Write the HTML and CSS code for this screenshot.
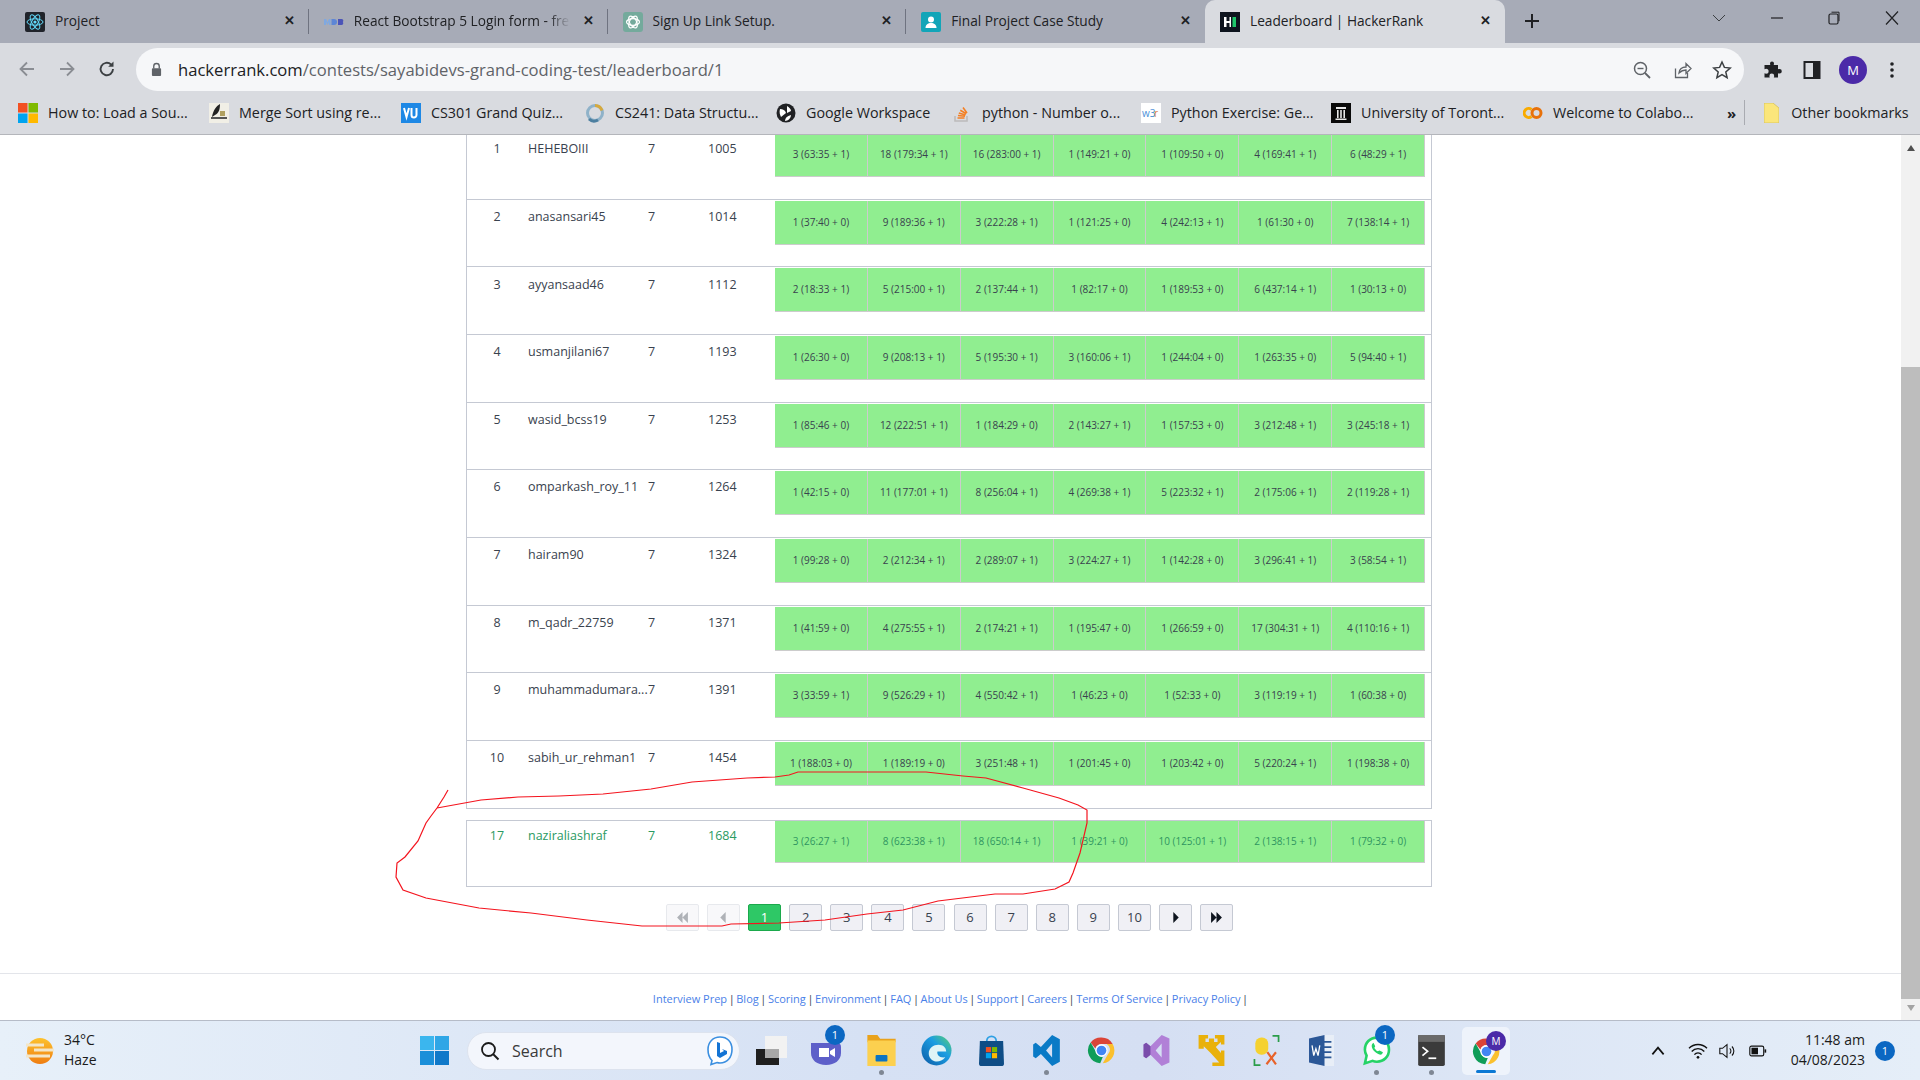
FILE: index.html
```html
<!DOCTYPE html>
<html lang="en">
<head>
<meta charset="utf-8">
<title>Leaderboard | HackerRank</title>
<link rel="stylesheet" href="styles.css">
</head>
<body>
<svg class="defs" width="0" height="0" aria-hidden="true">
  <symbol id="chrome" viewBox="0 0 48 48">
    <path d="M24 4a20 20 0 0 1 17.300 10H24a10 10 0 0 0-9.500 7L7.200 11.800A20 20 0 0 1 24 4z" fill="#db4437"/>
    <path d="M41.300 14A20 20 0 0 1 26 43.900l8-14a10 10 0 0 0-2-15.900z" fill="#fbc02d"/>
    <path d="M7.200 11.800 16 27a10 10 0 0 0 10 7l-4 9.900A20 20 0 0 1 7.200 11.800z" fill="#0f9d58"/>
    <circle cx="24" cy="24" r="9.500" fill="#fff"/><circle cx="24" cy="24" r="7.500" fill="#4285f4"/>
  </symbol>
</svg>

<header class="tabstrip">
  <div class="tab">
    <svg class="fav" viewBox="0 0 20 20"><rect width="20" height="20" rx="2" fill="#20232a"/><g fill="none" stroke="#61dafb" stroke-width="1"><ellipse cx="10" cy="10" rx="8" ry="3.200"/><ellipse cx="10" cy="10" rx="8" ry="3.200" transform="rotate(60 10 10)"/><ellipse cx="10" cy="10" rx="8" ry="3.200" transform="rotate(120 10 10)"/></g><circle cx="10" cy="10" r="1.600" fill="#61dafb"/></svg>
    <span class="tab-title">Project</span><span class="tab-x">✕</span>
  </div>
  <div class="tab">
    <svg class="fav" viewBox="0 0 20 20"><path d="M0 7h2l1.500 3L5 7h1.500v6H5V10l-1.500 3L2 10v3H0z" fill="#7fa8e0"/><path d="M7.500 7H10a3 3 0 0 1 0 6H7.500z" fill="#5d86d6"/><path d="M14 7h3a1.800 1.800 0 0 1 1.800 3A1.800 1.800 0 0 1 17.500 13H14z" fill="#4b54b8"/></svg>
    <span class="tab-title tab-fade">React Bootstrap 5 Login form - free</span><span class="tab-x">✕</span>
  </div>
  <div class="tab">
    <svg class="fav" viewBox="0 0 20 20"><rect width="20" height="20" rx="3" fill="#74aa9c"/><g fill="none" stroke="#fff" stroke-width="1.200"><ellipse cx="10" cy="10" rx="6.500" ry="3.400"/><ellipse cx="10" cy="10" rx="6.500" ry="3.400" transform="rotate(60 10 10)"/><ellipse cx="10" cy="10" rx="6.500" ry="3.400" transform="rotate(120 10 10)"/></g></svg>
    <span class="tab-title">Sign Up Link Setup.</span><span class="tab-x">✕</span>
  </div>
  <div class="tab">
    <svg class="fav" viewBox="0 0 20 20"><rect width="20" height="20" rx="2" fill="#12a5b8"/><circle cx="10" cy="7.500" r="3" fill="#fff"/><path d="M4.500 16c0-3.500 2.500-5 5.500-5s5.500 1.500 5.500 5z" fill="#fff"/></svg>
    <span class="tab-title">Final Project Case Study</span><span class="tab-x">✕</span>
  </div>
  <div class="tab tab-active">
    <svg class="fav" viewBox="0 0 20 20"><rect width="20" height="20" fill="#0e141e"/><path d="M4 5h2.500v4h3V5H11v10H9.500v-4h-3v4H4z" fill="#fff"/><rect x="12.500" y="5" width="3.500" height="10" fill="#1ec66a"/></svg>
    <span class="tab-title">Leaderboard | HackerRank</span><span class="tab-x">✕</span>
  </div>
  <svg class="newtab" viewBox="0 0 16 16"><path d="M8 1v14M1 8h14" stroke="#202124" stroke-width="2"/></svg>
  <div class="winctl">
    <svg viewBox="0 0 16 16"><path d="M2 5l6 6 6-6" fill="none" stroke="#3c4043" stroke-width="1"/></svg>
    <svg viewBox="0 0 16 16"><path d="M2 8h12" stroke="#202124" stroke-width="1.200"/></svg>
    <svg viewBox="0 0 16 16"><rect x="3" y="4" width="9" height="10" rx="1.500" fill="none" stroke="#202124" stroke-width="1.200"/><path d="M5.500 2.200H13v9" fill="none" stroke="#202124" stroke-width="1"/></svg>
    <svg viewBox="0 0 16 16"><path d="M2 1.500l12 13M14 1.500l-12 13" stroke="#202124" stroke-width="1.200"/></svg>
  </div>
</header>

<div class="toolbar">
  <div class="nav">
    <svg viewBox="0 0 20 20"><path d="M17 10H4M10 3.500L3.500 10l6.500 6.500" fill="none" stroke="#8a8d93" stroke-width="1.800"/></svg>
    <svg viewBox="0 0 20 20"><path d="M3 10h13M10 3.500l6.500 6.500-6.500 6.500" fill="none" stroke="#8a8d93" stroke-width="1.800"/></svg>
    <svg viewBox="0 0 20 20"><path d="M16 10a6.200 6.200 0 1 1-1.900-4.500" fill="none" stroke="#3c4043" stroke-width="1.900"/><path d="M16.500 2.500v5.300h-5.300z" fill="#3c4043"/></svg>
  </div>
  <div class="omnibox">
    <svg class="lock" viewBox="0 0 12 16"><path d="M3 7V4.500a3 3 0 0 1 6 0V7" fill="none" stroke="#5f6368" stroke-width="1.500"/><rect x="1" y="6.500" width="10" height="8.500" rx="1" fill="#5f6368"/></svg>
    <div class="url"><span class="host">hackerrank.com</span>/contests/sayabidevs-grand-coding-test/leaderboard/1</div>
    <div class="omni-icons">
      <svg viewBox="0 0 20 20"><circle cx="8.500" cy="8.500" r="6" fill="none" stroke="#5f6368" stroke-width="1.500"/><path d="M13 13l5 5" stroke="#5f6368" stroke-width="1.800"/><path d="M5.500 8.500h6" stroke="#5f6368" stroke-width="1.400"/></svg>
      <svg viewBox="0 0 20 20"><path d="M3.500 8.500V17.500h12V13" fill="none" stroke="#5f6368" stroke-width="1.300"/><path d="M7 13c.5-4 3.500-6 7-6V3.500l5 5-5 5V10c-3 0-5 1-7 3z" fill="none" stroke="#5f6368" stroke-width="1.300"/></svg>
      <svg viewBox="0 0 20 20"><path d="M10 2l2.400 5.400 5.800.6-4.400 3.900 1.300 5.800L10 14.700l-5.100 3 1.300-5.800L1.800 8l5.800-.6z" fill="none" stroke="#3c4043" stroke-width="1.500"/></svg>
    </div>
  </div>
  <div class="tools">
    <svg viewBox="0 0 20 20"><path d="M8 2a2 2 0 0 1 4 0c0 .5-.2 1-.3 1.500H16v4.300c.5-.2 1-.3 1.500-.3a2.300 2.300 0 0 1 0 4.600c-.5 0-1-.2-1.500-.4V16h-4.200c.2-.6.400-1 .4-1.600a2.400 2.400 0 0 0-4.800 0c0 .6.200 1 .4 1.600H2.500v-4.300c.5.300 1 .5 1.600.5a2.500 2.500 0 0 0 0-5c-.6 0-1.100.2-1.600.5V3.500h5.800C8.200 3 8 2.500 8 2z" fill="#202124" transform="translate(0 1.500)"/></svg>
    <svg viewBox="0 0 20 20"><rect x="2.500" y="2" width="15" height="16" fill="none" stroke="#202124" stroke-width="2"/><rect x="11" y="2" width="6.500" height="16" fill="#202124"/></svg>
    <div class="avatar">M</div>
    <svg viewBox="0 0 20 20"><circle cx="10" cy="4" r="1.800" fill="#202124"/><circle cx="10" cy="10" r="1.800" fill="#202124"/><circle cx="10" cy="16" r="1.800" fill="#202124"/></svg>
  </div>
</div>

<nav class="bookmarks">
  <a class="bm"><svg class="fav" viewBox="0 0 20 20"><rect width="9.500" height="9.500" fill="#f25022"/><rect x="10.500" width="9.500" height="9.500" fill="#7fba00"/><rect y="10.500" width="9.500" height="9.500" fill="#00a4ef"/><rect x="10.500" y="10.500" width="9.500" height="9.500" fill="#ffb900"/></svg>How to: Load a Sou...</a>
  <a class="bm"><svg class="fav" viewBox="0 0 20 20"><rect width="20" height="20" fill="#f1efe6"/><path d="M3 14C4 8 7 3 11 1c0 5-1 9-5 11z" fill="#222"/><rect x="2" y="14" width="16" height="2" fill="#555"/><path d="M11 8h5v5h-5z" fill="#b0a060"/></svg>Merge Sort using re...</a>
  <a class="bm"><svg class="fav" viewBox="0 0 20 20"><rect width="20" height="20" fill="#1e88e5"/><path d="M3 5l2.500 9L8 5M10.500 5v7a2.500 2.500 0 0 0 5 0V5" fill="none" stroke="#fff" stroke-width="2"/></svg>CS301 Grand Quiz...</a>
  <a class="bm"><svg class="fav" viewBox="0 0 20 20"><circle cx="10" cy="10" r="7.500" fill="none" stroke="#8fb2c9" stroke-width="3"/><path d="M10 2.500a7.500 7.500 0 0 1 7 5" fill="none" stroke="#d6a93d" stroke-width="3"/><path d="M4 16a7.500 7.500 0 0 0 9 1" fill="none" stroke="#4c7fa0" stroke-width="3"/></svg>CS241: Data Structu...</a>
  <a class="bm"><svg class="fav" viewBox="0 0 20 20"><circle cx="10" cy="10" r="9.500" fill="#202124"/><path d="M4 6c3 0 5 1 6 4l-5 4c-1-2-2-5-1-8zM11 3c2 1 4 3 4 5l-4 2zM9 18c0-3 2-5 6-6 0 3-3 6-6 6z" fill="#fff"/></svg>Google Workspace</a>
  <a class="bm"><svg class="fav" viewBox="0 0 20 20"><path d="M3 13v5h12v-5" fill="none" stroke="#bcbbbb" stroke-width="1.600"/><path d="M5.500 15h7M6 12.500l7 .8M6.800 10l6.700 2M8.300 7.300l6 3.500M11 4.500l4 5.500" stroke="#f48024" stroke-width="1.600"/></svg>python - Number o...</a>
  <a class="bm"><svg class="fav" viewBox="0 0 20 20"><rect width="20" height="20" fill="#fff"/><text x="1" y="14" font-size="10" fill="#4a90d9" font-family="Open Sans">w3</text><text x="13" y="14" font-size="10" fill="#e07a3a" font-family="Open Sans">r</text></svg>Python Exercise: Ge...</a>
  <a class="bm"><svg class="fav" viewBox="0 0 20 20"><rect width="20" height="20" fill="#0a0a0a"/><path d="M5 4h10v2H5zM6 7h1.600v8H6zM9.200 7h1.600v8H9.200zM12.400 7H14v8h-1.600zM4.500 15.500h11V17h-11z" fill="#e8e8e8"/></svg>University of Toront...</a>
  <a class="bm"><svg class="fav" viewBox="0 0 20 20"><g fill="none" stroke-width="3"><path d="M8.500 6.500a4.500 4.500 0 1 0 0 7" stroke="#f9ab00"/><circle cx="13.500" cy="10" r="4.500" stroke="#e8710a"/></g></svg>Welcome to Colabo...</a>
  <div class="bm-end">
    <span class="chev">»</span><span class="bm-div"></span>
    <a class="bm bm-other"><svg class="folder" viewBox="0 0 15 20"><path d="M0 0h9l6 5v15H0z" fill="#fbe67b"/><path d="M0 0h9l6 5v15H0z" fill="none" stroke="#d6c05a" stroke-width=".8"/></svg>Other bookmarks</a>
  </div>
</nav>

<div class="viewport">
  <main class="page">
    <section class="board">
      <div class="row row-first"><div class="rank">1</div><div class="name">HEHEBOIII</div><div class="solved">7</div><div class="score">1005</div><div class="cells"><div class="cell">3 (63:35 + 1)</div><div class="cell">18 (179:34 + 1)</div><div class="cell">16 (283:00 + 1)</div><div class="cell">1 (149:21 + 0)</div><div class="cell">1 (109:50 + 0)</div><div class="cell">4 (169:41 + 1)</div><div class="cell">6 (48:29 + 1)</div></div></div>
      <div class="row"><div class="rank">2</div><div class="name">anasansari45</div><div class="solved">7</div><div class="score">1014</div><div class="cells"><div class="cell">1 (37:40 + 0)</div><div class="cell">9 (189:36 + 1)</div><div class="cell">3 (222:28 + 1)</div><div class="cell">1 (121:25 + 0)</div><div class="cell">4 (242:13 + 1)</div><div class="cell">1 (61:30 + 0)</div><div class="cell">7 (138:14 + 1)</div></div></div>
      <div class="row"><div class="rank">3</div><div class="name">ayyansaad46</div><div class="solved">7</div><div class="score">1112</div><div class="cells"><div class="cell">2 (18:33 + 1)</div><div class="cell">5 (215:00 + 1)</div><div class="cell">2 (137:44 + 1)</div><div class="cell">1 (82:17 + 0)</div><div class="cell">1 (189:53 + 0)</div><div class="cell">6 (437:14 + 1)</div><div class="cell">1 (30:13 + 0)</div></div></div>
      <div class="row"><div class="rank">4</div><div class="name">usmanjilani67</div><div class="solved">7</div><div class="score">1193</div><div class="cells"><div class="cell">1 (26:30 + 0)</div><div class="cell">9 (208:13 + 1)</div><div class="cell">5 (195:30 + 1)</div><div class="cell">3 (160:06 + 1)</div><div class="cell">1 (244:04 + 0)</div><div class="cell">1 (263:35 + 0)</div><div class="cell">5 (94:40 + 1)</div></div></div>
      <div class="row"><div class="rank">5</div><div class="name">wasid_bcss19</div><div class="solved">7</div><div class="score">1253</div><div class="cells"><div class="cell">1 (85:46 + 0)</div><div class="cell">12 (222:51 + 1)</div><div class="cell">1 (184:29 + 0)</div><div class="cell">2 (143:27 + 1)</div><div class="cell">1 (157:53 + 0)</div><div class="cell">3 (212:48 + 1)</div><div class="cell">3 (245:18 + 1)</div></div></div>
      <div class="row"><div class="rank">6</div><div class="name">omparkash_roy_11</div><div class="solved">7</div><div class="score">1264</div><div class="cells"><div class="cell">1 (42:15 + 0)</div><div class="cell">11 (177:01 + 1)</div><div class="cell">8 (256:04 + 1)</div><div class="cell">4 (269:38 + 1)</div><div class="cell">5 (223:32 + 1)</div><div class="cell">2 (175:06 + 1)</div><div class="cell">2 (119:28 + 1)</div></div></div>
      <div class="row"><div class="rank">7</div><div class="name">hairam90</div><div class="solved">7</div><div class="score">1324</div><div class="cells"><div class="cell">1 (99:28 + 0)</div><div class="cell">2 (212:34 + 1)</div><div class="cell">2 (289:07 + 1)</div><div class="cell">3 (224:27 + 1)</div><div class="cell">1 (142:28 + 0)</div><div class="cell">3 (296:41 + 1)</div><div class="cell">3 (58:54 + 1)</div></div></div>
      <div class="row"><div class="rank">8</div><div class="name">m_qadr_22759</div><div class="solved">7</div><div class="score">1371</div><div class="cells"><div class="cell">1 (41:59 + 0)</div><div class="cell">4 (275:55 + 1)</div><div class="cell">2 (174:21 + 1)</div><div class="cell">1 (195:47 + 0)</div><div class="cell">1 (266:59 + 0)</div><div class="cell">17 (304:31 + 1)</div><div class="cell">4 (110:16 + 1)</div></div></div>
      <div class="row"><div class="rank">9</div><div class="name">muhammadumara...</div><div class="solved">7</div><div class="score">1391</div><div class="cells"><div class="cell">3 (33:59 + 1)</div><div class="cell">9 (526:29 + 1)</div><div class="cell">4 (550:42 + 1)</div><div class="cell">1 (46:23 + 0)</div><div class="cell">1 (52:33 + 0)</div><div class="cell">3 (119:19 + 1)</div><div class="cell">1 (60:38 + 0)</div></div></div>
      <div class="row"><div class="rank">10</div><div class="name">sabih_ur_rehman1</div><div class="solved">7</div><div class="score">1454</div><div class="cells"><div class="cell">1 (188:03 + 0)</div><div class="cell">1 (189:19 + 0)</div><div class="cell">3 (251:48 + 1)</div><div class="cell">1 (201:45 + 0)</div><div class="cell">1 (203:42 + 0)</div><div class="cell">5 (220:24 + 1)</div><div class="cell">1 (198:38 + 0)</div></div></div>
      <div class="row row-me"><div class="rank">17</div><div class="name">naziraliashraf</div><div class="solved">7</div><div class="score">1684</div><div class="cells"><div class="cell">3 (26:27 + 1)</div><div class="cell">8 (623:38 + 1)</div><div class="cell">18 (650:14 + 1)</div><div class="cell">1 (39:21 + 0)</div><div class="cell">10 (125:01 + 1)</div><div class="cell">2 (138:15 + 1)</div><div class="cell">1 (79:32 + 0)</div></div></div>
    </section>

    <div class="pager">
      <a class="pg pg-off"><svg viewBox="0 0 12 10"><path d="M6 0v10L1 5zM11 0v10L6 5z" fill="#39424e"/></svg></a>
      <a class="pg pg-off"><svg viewBox="0 0 12 10"><path d="M8 0v10L3 5z" fill="#39424e"/></svg></a>
      <a class="pg pg-on">1</a><a class="pg">2</a><a class="pg">3</a><a class="pg">4</a><a class="pg">5</a><a class="pg">6</a><a class="pg">7</a><a class="pg">8</a><a class="pg">9</a><a class="pg">10</a>
      <a class="pg"><svg viewBox="0 0 12 10"><path d="M4 0v10l5-5z" fill="#0e141e"/></svg></a>
      <a class="pg"><svg viewBox="0 0 12 10"><path d="M1 0v10l5-5zM6 0v10l5-5z" fill="#0e141e"/></svg></a>
    </div>

    <footer class="foot">
      <a>Interview Prep</a> | <a>Blog</a> | <a>Scoring</a> | <a>Environment</a> | <a>FAQ</a> | <a>About Us</a> | <a>Support</a> | <a>Careers</a> | <a>Terms Of Service</a> | <a>Privacy Policy</a> |
    </footer>

    <svg class="scribble" viewBox="0 0 1901 885" aria-hidden="true">
      <path d="M448 655L444 662L437 673L431 681L426 688L418 706L405 722L397 728L396 742L403 755L426 763L479 773L531 778L587 785L642 791L722 791L731 789L779 788L825 785L867 779L903 775L938 766L995 759L1023 759L1055 754L1069 747L1073 738L1080 718L1087 688L1087 675L1078 670L1059 663L1023 653L986 643L963 641L926 637L798 637L789 640L775 642L747 643L692 647L651 654L603 659L559 661L518 662L481 665L437 673" fill="none" stroke="#f4141e" stroke-width="1.200"/>
    </svg>
  </main>
  <aside class="scrollbar">
    <span class="sb-up"></span>
    <span class="sb-thumb"></span>
    <span class="sb-down"></span>
  </aside>
</div>

<footer class="taskbar">
  <div class="weather">
    <svg class="wx-icon" viewBox="0 0 28 34"><defs><linearGradient id="sun" x1="0" y1="0" x2="0" y2="1"><stop offset="0" stop-color="#fdc22e"/><stop offset="1" stop-color="#ef7d11"/></linearGradient></defs><circle cx="14" cy="17" r="13" fill="url(#sun)"/><path d="M0 11h18M8 16h20M0 22h24" stroke="#f3e6c8" stroke-width="3"/></svg>
    <div class="wx-text"><div>34°C</div><div>Haze</div></div>
  </div>
  <svg class="start" viewBox="0 0 29 29"><rect width="14" height="14" fill="#3bb6ee"/><rect x="15" width="14" height="14" fill="#2fa6e6"/><rect y="15" width="14" height="14" fill="#1b8fd9"/><rect x="15" y="15" width="14" height="14" fill="#1079c9"/></svg>
  <div class="search">
    <svg class="search-glass" viewBox="0 0 20 20"><circle cx="8.500" cy="8.500" r="6.500" fill="none" stroke="#1a1a1a" stroke-width="1.800"/><path d="M13 13l5.500 5.500" stroke="#1a1a1a" stroke-width="2"/></svg>
    <span class="search-label">Search</span>
    <svg class="bing" viewBox="0 0 26 30"><path d="M13 1C6 1 1 6 1 13.500c0 5 2 9 4 11l-1 4 6-2c1 .3 2 .5 3 .5 7 0 12-5.500 12-13.500S20 1 13 1z" fill="#fff" stroke="#3b8fe0" stroke-width="1.600"/><path d="M10 6l3 1v10l4-2-2-2 5 2v3l-7 4-3-2z" fill="#1474d4"/></svg>
  </div>
  <div class="apps">
    <svg class="app" viewBox="0 0 31 29"><rect x="0" y="13" width="23" height="16" fill="#1f1f1f"/><rect x="9" y="0" width="22" height="22" fill="#f2f2f2"/><rect x="9" y="13" width="14" height="9" fill="#a8a8a8"/></svg>
    <span class="app app-wrap"><svg viewBox="0 0 31 31"><path d="M0 8h26a4 4 0 0 1 4 4v6c0 7-6 12-15 12S0 25 0 18z" fill="#5d5fc9"/><path d="M8 13h10v9H8zM19 16l5-3v9l-5-3z" fill="#fff"/></svg><span class="badge badge-app">1</span></span>
    <span class="app app-wrap"><svg viewBox="0 0 31 34"><path d="M0 0h11l3 4h17v4H0z" fill="#e9a21b"/><path d="M0 6h31v28H0z" fill="#fcd04f"/><rect x="9" y="22" width="13" height="7" rx="1" fill="#0b74c4"/></svg><span class="dot"></span></span>
    <svg class="app" viewBox="0 0 32 32"><defs><linearGradient id="edge" x1="0" y1="1" x2="1" y2="0"><stop offset="0" stop-color="#0c59a4"/><stop offset=".6" stop-color="#1b9de2"/><stop offset="1" stop-color="#5dd36c"/></linearGradient></defs><circle cx="16" cy="16" r="15.500" fill="url(#edge)"/><path d="M8 19c0-6 5-9 10-9 5 0 8 3 8 7h-9c-1 3 2 7 8 6-3 4-8 5-11 4-3-1-6-4-6-8z" fill="#dff4f6"/></svg>
    <svg class="app" viewBox="0 0 31 36"><path d="M10 7a5.500 5.500 0 0 1 11 0" fill="none" stroke="#2ea0e4" stroke-width="2"/><path d="M2 7h27l1 26a3 3 0 0 1-3 3H4a3 3 0 0 1-3-3z" fill="#0f4d86"/><rect x="9" y="14" width="6" height="6" fill="#f25022"/><rect x="16" y="14" width="6" height="6" fill="#7fba00"/><rect x="9" y="21" width="6" height="6" fill="#00a4ef"/><rect x="16" y="21" width="6" height="6" fill="#ffb900"/></svg>
    <span class="app app-wrap"><svg viewBox="0 0 31 36"><path d="M22 0l9 5v26l-9 5L9 22l-6 5-3-2V11l3-2 6 5zM22 10l-7 8 7 8z" fill="#0a7ac6"/></svg><span class="dot"></span></span>
    <svg class="app" viewBox="0 0 48 48"><use href="#chrome"/></svg>
    <svg class="app" viewBox="0 0 30 36"><path d="M21 0l9 4v28l-9 4L8 23l-5 4-3-2V11l3-2 5 4zM21 10l-7 8 7 8z" fill="#b180d7"/><path d="M0 11l3-2 5 4 0 10-5 4-3-2z" fill="#7a4dab"/></svg>
    <svg class="app" viewBox="0 0 30 36"><path d="M0 0h11v4H8v4h4V4h6v4h4V4h-3V0h11v11h-4V8l-6 6 6 7v-3h4v18H16v-4h8l-10-11-8-8v3H0z" fill="#e9b10a"/></svg>
    <svg class="app" viewBox="0 0 30 36"><path d="M22 0h8v8h-2V2h-6zM0 28h2v6h6v2H0z" fill="#2a9d4a"/><rect x="2" y="3" width="15" height="20" rx="7" fill="#f5d130"/><path d="M16 20l10 14M26 20L15 34" stroke="#e8622a" stroke-width="2.500"/></svg>
    <svg class="app" viewBox="0 0 29 36"><path d="M13 0h16v36H13z" fill="#e8eef7"/><path d="M17 8h9M17 14h9M17 20h9M17 26h9" stroke="#2b5797" stroke-width="2"/><path d="M0 4l18-4v36L0 32z" fill="#2b5797"/><path d="M3.500 12l2 12 2.500-8 2.500 8 2-12" fill="none" stroke="#fff" stroke-width="1.500"/></svg>
    <span class="app app-wrap"><svg viewBox="0 0 31 36"><path d="M16 3C8 3 2 9 2 17c0 3 1 5 2 7l-2 9 9-3c2 1 3 1 5 1 8 0 14-6 14-14S24 3 16 3z" fill="#fff" stroke="#25d366" stroke-width="3"/><path d="M11 10c-2 2-1 6 2 9s7 5 9 3l1-2-4-2-2 1c-2-1-3-3-4-4l1-2-2-4z" fill="#25d366"/></svg><span class="badge badge-app">1</span><span class="dot"></span></span>
    <span class="app app-wrap"><svg viewBox="0 0 31 36"><rect width="31" height="36" rx="2" y="0" fill="#3b3b3b"/><rect width="31" height="8" fill="#6a6a6a"/><path d="M5 14l6 5-6 5" fill="none" stroke="#fff" stroke-width="2"/><path d="M12 27h9" stroke="#fff" stroke-width="2"/></svg><span class="dot"></span></span>
    <span class="app-active"><svg viewBox="0 0 48 48"><use href="#chrome"/></svg><span class="app-avatar">M</span><span class="app-line"></span></span>
  </div>
  <div class="tray">
    <svg class="tray-i tray-caret" viewBox="0 0 16 16"><path d="M3 11l5-6 5 6" fill="none" stroke="#111" stroke-width="1.500"/></svg>
    <svg class="tray-i tray-wifi" viewBox="0 0 22 20"><path d="M1 7a14 14 0 0 1 20 0M4 10.500a9.500 9.500 0 0 1 14 0M7 14a5 5 0 0 1 8 0" fill="none" stroke="#111" stroke-width="1.500"/><circle cx="11" cy="17" r="1.500" fill="#111"/></svg>
    <svg class="tray-i tray-spk" viewBox="0 0 20 20"><path d="M2 7h3l5-4v14l-5-4H2z" fill="none" stroke="#111" stroke-width="1.200"/><path d="M13 7a4 4 0 0 1 0 6M15.500 5a7 7 0 0 1 0 10" fill="none" stroke="#111" stroke-width="1.200"/></svg>
    <svg class="tray-i" viewBox="0 0 22 14"><rect x="1" y="1" width="17" height="12" rx="2" fill="none" stroke="#111" stroke-width="1.400"/><rect x="3" y="3" width="8" height="8" fill="#111"/><rect x="19" y="5" width="2" height="4" fill="#111"/></svg>
    <div class="clock"><div>11:48 am</div><div>04/08/2023</div></div>
    <span class="badge badge-tray">1</span>
  </div>
</footer>
</body>
</html>
```

FILE: styles.css
```css
* { box-sizing: border-box; }
html, body { margin: 0; height: 100%; }
body {
  width: 1920px; height: 1080px; overflow: hidden; display: flex; flex-direction: column;
  font-family: "Open Sans", "Noto Sans", sans-serif; color: #39424e; background: #fff;
}
.defs { position: absolute; }
svg { display: block; flex: none; }
.fav { width: 20px; height: 20px; flex: none; }

/* tab strip */
.tabstrip { height: 43px; background: #a7abb7; display: flex; align-items: stretch; padding-left: 10px; flex: none; }
.tab { width: 298.750px; display: flex; align-items: center; padding-left: 15px; position: relative; font-size: 13.700px; color: #202124; }
.tab:not(.tab-active):not(:nth-child(4))::after { content: ""; position: absolute; right: 0; top: 9px; height: 25px; width: 1px; background: #6f7380; }
.tab-active { width: 300px; background: #d9dbe0; border-radius: 10px 10px 0 0; }
.tab-title { margin-left: 10px; padding-bottom: 2px; white-space: nowrap; overflow: hidden; width: 220px; }
.tab-fade { width: 216px; -webkit-mask-image: linear-gradient(90deg, #000 90%, transparent 100%); mask-image: linear-gradient(90deg, #000 90%, transparent 100%); }
.tab-x { position: absolute; right: 14px; top: 12px; font-size: 13px; line-height: 16px; font-weight: 700; color: #202124; }
.newtab { width: 16px; height: 16px; margin: 13px 0 0 19px; }
.winctl { display: flex; margin-left: 171px; margin-top: 10px; gap: 41.500px; height: 16px; }
.winctl svg { width: 16px; height: 16px; }

/* toolbar */
.toolbar { height: 50px; background: #d9dbe0; display: flex; align-items: flex-start; padding-top: 5px; flex: none; }
.nav { width: 136px; display: flex; gap: 20px; padding: 11px 0 0 17px; }
.nav svg { width: 20px; height: 20px; }
.omnibox { width: 1608px; height: 43px; background: #f6f7f9; border-radius: 22px; display: flex; align-items: center; padding-left: 15px; }
.lock { width: 11px; height: 15px; }
.url { margin-left: 16px; padding-bottom: 1px; font-size: 16.600px; color: #5f6368; white-space: nowrap; }
.host { color: #202124; }
.omni-icons { margin-left: auto; display: flex; gap: 20px; padding-right: 12px; }
.omni-icons svg { width: 20px; height: 20px; }
.tools { display: flex; align-items: center; height: 43px; padding-left: 18px; }
.tools svg { width: 20px; height: 20px; }
.tools svg:nth-child(2) { margin-left: 20px; }
.avatar { width: 28px; height: 28px; margin-left: 17px; margin-right: 15px; border-radius: 50%; background: #4b2aa8; color: #fff; font-size: 13px; text-align: center; line-height: 28px; }

/* bookmarks */
.bookmarks { height: 42px; background: #d9dbe0; border-bottom: 1px solid #b4b6bb; display: grid; grid-template-columns: 191px 192px 184px 191px 176px 189px 190px 192px 204px 1fr; padding: 0 0 2px 18px; align-items: center; flex: none; }
.bm { display: flex; align-items: center; gap: 10px; font-size: 14.300px; color: #202124; white-space: nowrap; }
.bm-end { display: flex; align-items: center; }
.chev { font-weight: 700; font-size: 15px; margin-right: 8px; color: #202124; }
.bm-div { width: 1px; height: 25px; background: #a9abb1; margin-right: 14px; }
.folder { width: 15px; height: 20px; }
.bm-other { gap: 12px; margin-left: 5px; }

/* page */
.viewport { height: 885px; display: flex; flex: none; overflow: hidden; }
.page { width: 1901px; position: relative; overflow: hidden; }
.board { width: 966px; margin: -3px 0 0 466px; display: flex; flex-direction: column; }
.row { height: 67.670px; display: grid; grid-template-columns: 60px 120px 61px 67px 650px; border: solid #c5c9d3; border-width: 0 1px 1.500px; font-size: 12.500px; line-height: 19px; }
.rank { text-align: center; padding-top: 7.200px; }
.name { padding: 7.200px 0 0 1px; white-space: nowrap; }
.solved { padding: 7.200px 0 0 1px; }
.score { padding-top: 7.200px; }
.cells { display: grid; grid-template-columns: repeat(7, 1fr); height: 45px; padding-top: 1px; }
.cell { background: #90ee90; border: solid #ccc; border-width: 0 1.500px 1.500px 0; display: flex; align-items: center; justify-content: center; font-size: 10px; white-space: nowrap; }
.row-me { margin-top: 11px; height: 67px; border-width: 1.500px 1px; color: #2a9a62; }
.row-me .rank, .row-me .name, .row-me .solved, .row-me .score { padding-top: 5px; }
.row-me .cells { height: 42.500px; padding-top: 0; }
.row-me .cell { color: #2f9560; }

.pager { display: flex; justify-content: center; gap: 8.100px; margin-top: 17.300px; padding-right: 2px; }
.pg { width: 33px; height: 27px; border: 1px solid #c5c9d3; border-radius: 2px; background: #f0f0f5; font-size: 13px; display: flex; align-items: center; justify-content: center; color: #39424e; }
.pg svg { width: 13px; height: 11px; }
.pg-off { opacity: .4; }
.pg-on { background: #2ec866; border-color: #1ba94c; color: #fff; }

.foot { margin-top: 42px; border-top: 1.500px solid #e3e5ea; padding-top: 17px; text-align: center; font-size: 11px; line-height: 16px; color: #39424e; word-spacing: -1.300px; }
.foot a { color: #4a7fe8; word-spacing: 0; }
.scribble { position: absolute; left: 0; top: 0; width: 1901px; height: 885px; pointer-events: none; }

.scrollbar { width: 19px; background: #f1f1f1; display: flex; flex-direction: column; align-items: center; }
.sb-up { margin-top: 10px; width: 0; height: 0; border: solid transparent; border-width: 0 4.500px 6px; border-bottom-color: #505050; }
.sb-thumb { width: 100%; height: 632px; margin-top: 216px; background: #bdbdbd; }
.sb-down { margin-top: 6px; width: 0; height: 0; border: solid transparent; border-width: 6px 4.500px 0; border-top-color: #a3a3a3; }

/* taskbar */
.taskbar { height: 60px; flex: none; border-top: 1px solid #b6bcc8; background: linear-gradient(90deg, #e7f0f9 0%, #d6e1f4 45%, #d5dff3 60%, #e5eef8 100%); display: flex; align-items: center; position: relative; }
.weather { display: flex; align-items: center; width: 420px; padding-left: 26px; gap: 10px; }
.wx-icon { width: 28px; height: 34px; }
.wx-text { font-size: 14px; line-height: 20px; color: #1b1b1b; padding-bottom: 2px; }
.start { width: 29px; height: 29px; }
.search { width: 273px; height: 38px; margin-left: 18px; border-radius: 19px; background: #f3f6fc; border: 1px solid #dde3ee; display: flex; align-items: center; padding: 0 6px 0 12px; }
.search-glass { width: 20px; height: 20px; }
.search-label { margin-left: 12px; font-size: 16px; color: #3a3a3a; }
.bing { width: 26px; height: 30px; margin-left: auto; }
.apps { display: flex; align-items: center; margin-left: 16px; width: 754px; position: relative; height: 48px; }
.app { width: 31px; height: 31px; margin-right: 24px; flex: none; position: relative; }
.app-wrap svg { width: 100%; height: 100%; }
.dot { position: absolute; left: 13px; bottom: -9px; width: 5px; height: 5px; border-radius: 50%; background: #7f8794; }
.badge { border-radius: 50%; background: #0b67c2; color: #fff; text-align: center; font-size: 11px; display: block; }
.badge-app { position: absolute; right: -3px; top: -10px; width: 20px; height: 20px; line-height: 20px; }
.app-active { width: 48px; height: 48px; margin-left: -9px; border-radius: 5px; background: #eef3fb; position: relative; padding: 9px 0 0 9px; }
.app-active svg { width: 31px; height: 31px; }
.app-avatar { position: absolute; right: 4px; top: 4px; width: 20px; height: 20px; border-radius: 50%; background: #4b2aa8; color: #fff; font-size: 10px; text-align: center; line-height: 20px; }
.app-line { position: absolute; left: 14px; bottom: 2px; width: 20px; height: 3px; border-radius: 2px; background: #0b78d4; }
.tray { position: absolute; left: 1649px; top: 0; height: 59px; width: 271px; display: flex; align-items: center; }
.tray-i { width: 18px; height: 18px; margin-right: 12px; }
.tray-caret { margin-right: 21px; }
.tray-wifi { width: 20px; margin-right: 10px; }
.tray-spk { margin-right: 13px; }
.clock { margin-left: auto; padding-bottom: 2px; text-align: right; font-size: 14px; line-height: 20px; color: #1b1b1b; }
.badge-tray { width: 20px; height: 20px; line-height: 20px; margin: 0 25px 0 10px; flex: none; }
```
